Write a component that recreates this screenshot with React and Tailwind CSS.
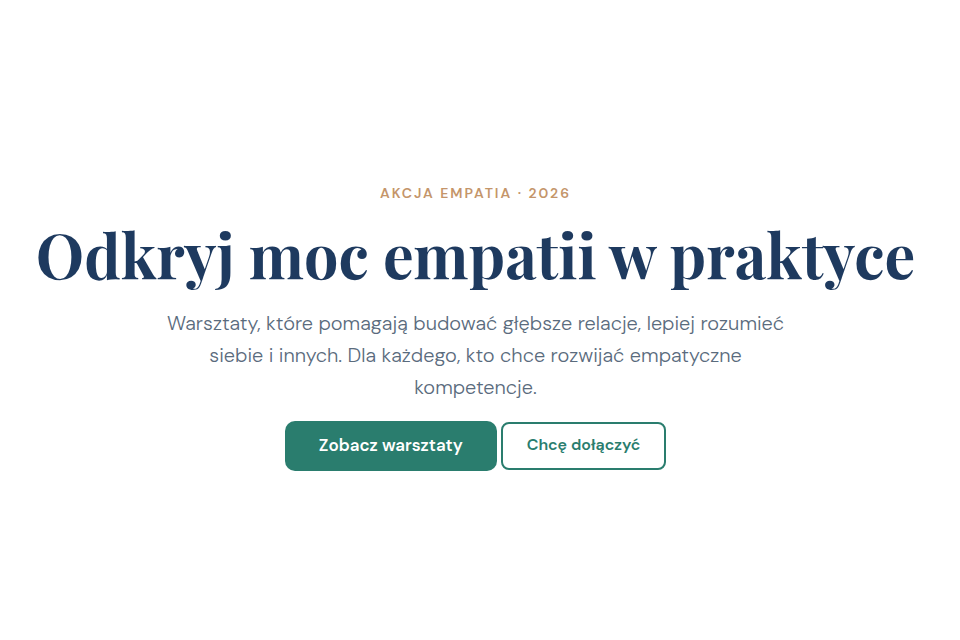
export default function App() {
  return (
    <main className="flex min-h-screen flex-col items-center justify-center pt-3 pr-[25px] pl-4 text-center font-['DM_Sans','Inter',sans-serif]">
      <p className="text-sm leading-6 font-semibold tracking-[2px] text-[#c4956a] uppercase">
        Akcja Empatia · 2026
      </p>
      <h1 className="mt-3.5 font-['Playfair_Display','Liberation_Serif',serif] text-[61px] leading-[70px] font-bold text-[#1e3a5f]">
        Odkryj moc empatii w praktyce
      </h1>
      <p className="mt-[18px] max-w-[620px] text-xl leading-8 font-light text-[#5a6b7d]">
        Warsztaty, które pomagają budować głębsze relacje, lepiej rozumieć siebie i innych. Dla każdego, kto chce
        rozwijać empatyczne kompetencje.
      </p>
      <div className="mt-[18px] flex flex-wrap items-center justify-center gap-1">
        <button type="button" className="rounded-[10px] bg-[#2a7d6e] px-[34px] pt-3 pb-3.5 text-[17px] leading-6 font-semibold text-white">
          Zobacz warsztaty
        </button>
        <button type="button" className="rounded-lg border-2 border-[#2a7d6e] px-6 pt-[11px] pb-[13px] text-base leading-5 font-semibold text-[#2a7d6e]">
          Chcę dołączyć
        </button>
      </div>
    </main>
  )
}
